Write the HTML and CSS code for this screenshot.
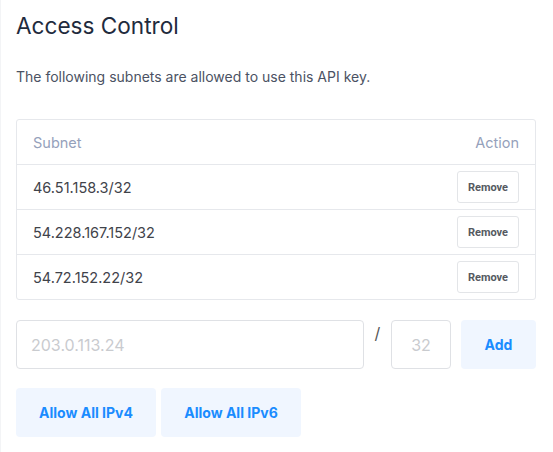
FILE: index.html
```html
<!DOCTYPE html>
<html>
<head>
<meta charset="utf-8">
<link rel="stylesheet" href="styles.css">
</head>
<body>
<div class="page">
  <h2 class="title">Access Control</h2>
  <p class="desc">The following subnets are allowed to use this API key.</p>
  <div class="table">
    <div class="row head">
      <span>Subnet</span>
      <span>Action</span>
    </div>
    <div class="row">
      <span class="subnet">46.51.158.3/32</span>
      <button class="remove">Remove</button>
    </div>
    <div class="row">
      <span class="subnet">54.228.167.152/32</span>
      <button class="remove">Remove</button>
    </div>
    <div class="row">
      <span class="subnet">54.72.152.22/32</span>
      <button class="remove">Remove</button>
    </div>
  </div>
  <div class="add-row">
    <input class="ip" type="text" placeholder="203.0.113.24">
    <span class="slash">/</span>
    <input class="mask" type="text" placeholder="32">
    <button class="btn add">Add</button>
  </div>
  <div class="allow-row">
    <button class="btn allow">Allow All IPv4</button>
    <button class="btn allow">Allow All IPv6</button>
  </div>
</div>
</body>
</html>
```

FILE: styles.css
```css
html, body {
  margin: 0;
  padding: 0;
  background: #ffffff;
}
body {
  font-family: Inter, "Noto Sans", sans-serif;
  border-left: 1px solid #f3f4f6;
  min-height: 452px;
  box-sizing: border-box;
}
.page {
  padding: 12px 17px 0 15px;
}
.title {
  margin: 0;
  font-size: 22.6px;
  line-height: 28px;
  font-weight: 400;
  color: #1f2b3d;
}
.desc {
  margin: 27px 0 0;
  font-size: 14px;
  line-height: 20px;
  color: #4b5263;
}
.table {
  margin-top: 32px;
  border: 1px solid #e6e8ec;
  border-radius: 3px;
}
.row {
  display: flex;
  justify-content: space-between;
  align-items: center;
  height: 44px;
  padding: 0 16px;
  border-top: 1px solid #e6e8ec;
  font-size: 14.5px;
  color: #3f434a;
}
.row.head {
  border-top: none;
  height: 44px;
  color: #95a1bb;
}
.remove {
  font-family: Roboto, "Liberation Sans", sans-serif;
  font-weight: 700;
  font-size: 11px;
  color: #555a61;
  background: #fff;
  border: 1px solid #e3e5e8;
  border-radius: 3px;
  width: 62px;
  height: 32px;
  padding: 0;
}
.add-row {
  display: flex;
  align-items: flex-start;
  margin-top: 20px;
}
.ip, .mask {
  box-sizing: border-box;
  height: 49px;
  border: 1px solid #dfe1e5;
  border-radius: 4px;
  font-family: Inter, sans-serif;
  font-size: 16px;
  padding: 0 14px;
  color: #333;
}
.ip::placeholder, .mask::placeholder {
  color: #c9cbcf;
}
.ip {
  width: 348px;
}
.slash {
  width: 27px;
  text-align: center;
  font-size: 16px;
  line-height: 20px;
  color: #555;
  padding-top: 3px;
}
.mask {
  width: 60px;
  text-align: center;
  padding: 0;
}
.btn {
  font-family: Inter, sans-serif;
  font-weight: 700;
  font-size: 14px;
  color: #1a8cff;
  background: #f0f6ff;
  border: none;
  border-radius: 4px;
  height: 49px;
  padding: 0;
}
.add {
  width: 75px;
  margin-left: 10px;
}
.allow-row {
  display: flex;
  gap: 5px;
  margin-top: 19px;
}
.allow {
  width: 140px;
}
```
